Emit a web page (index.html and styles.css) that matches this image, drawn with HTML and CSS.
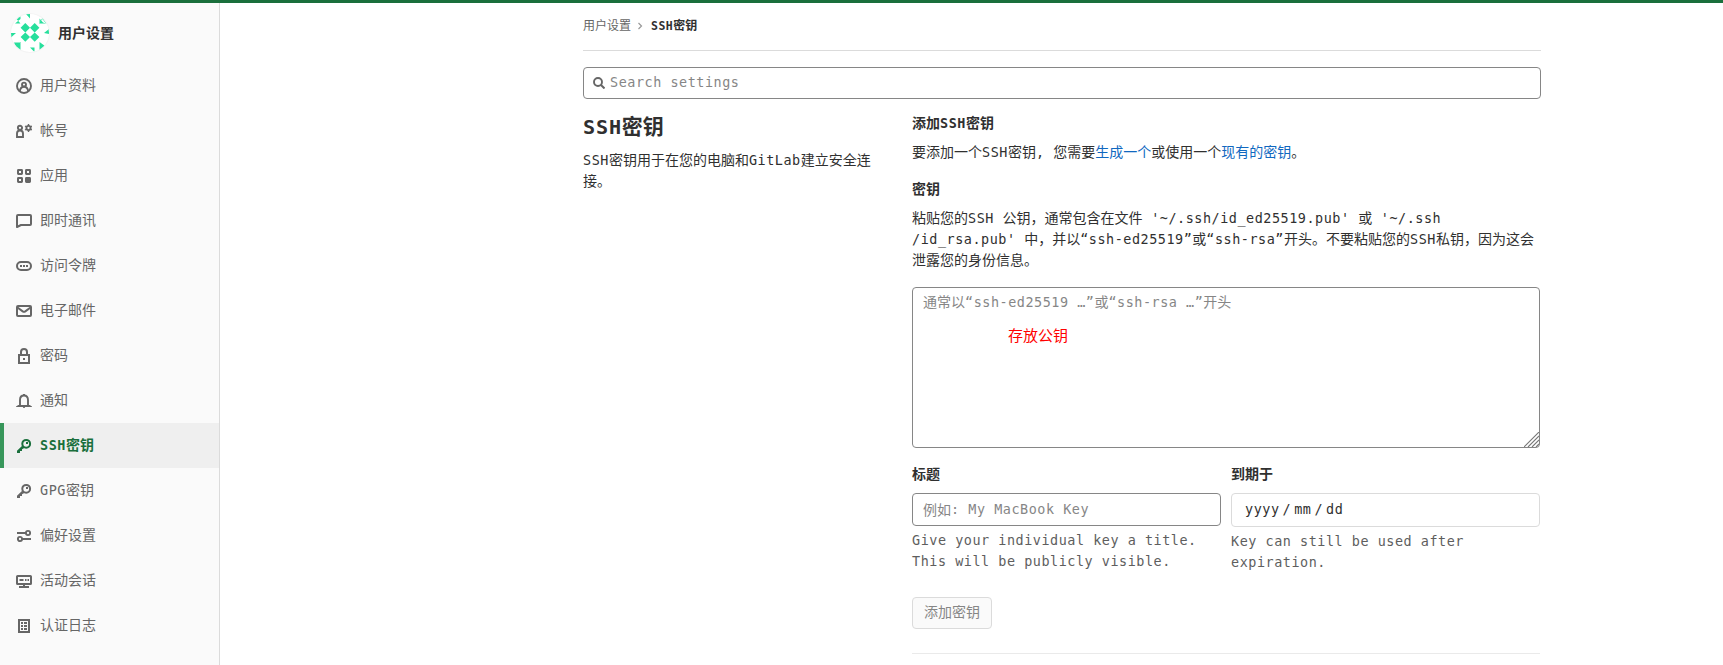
FILE: index.html
```html
<!DOCTYPE html>
<html lang="zh-CN">
<head>
<meta charset="utf-8">
<title>SSH密钥</title>
<link rel="stylesheet" href="styles.css">
</head>
<body>
<div class="topbar"></div>
<div class="layout">
<aside class="sidebar">
  <div class="context">
    <svg class="avatar" viewBox="0 0 38 38"><circle cx="19" cy="19" r="19" fill="#fff"/><g fill="#27df9c"><path d="M14.300 9l4.700 4.700-4.700 4.700-4.700-4.700zM23.700 9l4.700 4.700-4.700 4.700-4.700-4.700zM14.300 18.400l4.700 4.700-4.700 4.700-4.700-4.700zM23.700 18.400l4.700 4.700-4.700 4.700-4.700-4.700z"/><path d="M15 0h4v4.500zM9.500 .5v9l-4-4.500zM4 9.500h5.500V5zM28.500 4.500v5h6.500l-3-1zM28.500 9.500l3-6 4 6zM28 9.500h7L31.500 5zM38 15v5l-5-1zM0 19h5l-5 4.500zM3 28.500h7l-5 5zM9.500 28v9L5 33zM28.500 28l5.500 4-5.500 5.500zM19 33.500h4.500V38z"/></g></svg>
    <span>用户设置</span>
  </div>
  <nav>
    <a class="item"><svg viewBox="0 0 16 16"><g fill="none" stroke="currentColor" stroke-width="1.900"><circle cx="8" cy="8" r="7"/><circle cx="8" cy="6.600" r="2"/><path d="M3.800 13.200c.4-2.600 1.800-4.400 4.200-4.400s3.800 1.800 4.200 4.400"/></g></svg><span>用户资料</span></a>
    <a class="item"><svg viewBox="0 0 16 16"><g fill="none" stroke="currentColor" stroke-width="1.900"><circle cx="4" cy="4.800" r="2.100"/><path d="M1 14V10.500q0-3 3-3t3 3V14z"/><circle cx="12.500" cy="5" r="2.100"/></g><path d="M12.500 1v2M12.500 7v2M9 3l1.700 1M14.300 6l1.700 1M9 7l1.700-1M14.300 4L16 3" stroke="currentColor" stroke-width="1.400"/></svg><span>帐号</span></a>
    <a class="item"><svg viewBox="0 0 16 16"><g fill="none" stroke="currentColor" stroke-width="2"><rect x="2" y="2" width="4" height="4" rx=".4"/><rect x="10" y="2" width="4" height="4" rx=".4"/><rect x="2" y="10" width="4" height="4" rx=".4"/><rect x="10" y="10" width="4" height="4" rx=".4" fill="currentColor"/></g></svg><span>应用</span></a>
    <a class="item"><svg viewBox="0 0 16 16"><path d="M1 14V3q0-1 1-1h12q1 0 1 1v8q0 1-1 1H5z" fill="none" stroke="currentColor" stroke-width="2" stroke-linejoin="round"/></svg><span>即时通讯</span></a>
    <a class="item"><svg viewBox="0 0 16 16"><rect x="1" y="4" width="14" height="8" rx="4" fill="none" stroke="currentColor" stroke-width="2"/><path d="M4 7h2v2H4zM7 7h2v2H7zM10 7h2v2h-2z" fill="currentColor"/></svg><span>访问令牌</span></a>
    <a class="item"><svg viewBox="0 0 16 16"><g fill="none" stroke="currentColor" stroke-width="2"><rect x="1" y="3" width="14" height="10" rx="1"/><path d="M1.500 4.500L6.700 8.400q1.300.9 2.600 0l5.200-3.900"/></g></svg><span>电子邮件</span></a>
    <a class="item"><svg viewBox="0 0 16 16"><path d="M3 7h10v8H3zM5 7V4q0-3 3-3t3 3v3" fill="none" stroke="currentColor" stroke-width="2"/><path d="M7 10h2v2H7z" fill="currentColor"/></svg><span>密码</span></a>
    <a class="item"><svg viewBox="0 0 16 16"><path d="M4 12V7q0-4.500 4-4.500T12 7v5l1.500 1h-11z" fill="none" stroke="currentColor" stroke-width="1.900"/><path d="M7 1h2v2H7zM6.500 13.500h3l-1 1.500h-1z" fill="currentColor"/></svg><span>通知</span></a>
    <a class="item active"><svg viewBox="0 0 16 16"><circle cx="10.200" cy="5.800" r="3.900" fill="none" stroke="currentColor" stroke-width="2"/><path d="M6.200 7.700L1 12.700V15h3v-2h2v-1.800l2.800-1.500zM10 4h2v2h-2z" fill="currentColor"/></svg><span><i class="m">SSH</i>密钥</span></a>
    <a class="item"><svg viewBox="0 0 16 16"><circle cx="10.200" cy="5.800" r="3.900" fill="none" stroke="currentColor" stroke-width="2"/><path d="M6.200 7.700L1 12.700V15h3v-2h2v-1.800l2.800-1.500zM10 4h2v2h-2z" fill="currentColor"/></svg><span><i class="m">GPG</i>密钥</span></a>
    <a class="item"><svg viewBox="0 0 16 16"><g fill="none" stroke="currentColor" stroke-width="1.900"><circle cx="12" cy="5" r="2.100"/><path d="M1 5h9M6 11h9"/><circle cx="4" cy="11" r="2.100"/></g></svg><span>偏好设置</span></a>
    <a class="item"><svg viewBox="0 0 16 16"><rect x="1" y="3" width="14" height="8" rx=".6" fill="none" stroke="currentColor" stroke-width="2"/><path d="M3.500 6h4v2h-4zM9 6h1.500v2H9zM11.500 6H13v2h-1.500zM7 12h2v1H7zM3 13h10v2H3z" fill="currentColor"/></svg><span>活动会话</span></a>
    <a class="item"><svg viewBox="0 0 16 16"><rect x="3" y="2" width="10" height="12" fill="none" stroke="currentColor" stroke-width="2"/><path d="M5 4h2v2H5zM8 4h3v2H8zM5 7h2v2H5zM8 7h3v2H8zM5 10h2v2H5zM8 10h3v2H8z" fill="currentColor"/></svg><span>认证日志</span></a>
  </nav>
</aside>
<main class="content">
  <div class="crumbs"><span>用户设置</span><svg viewBox="0 0 8 8"><path d="M2.500 1l3 3-3 3" fill="none" stroke="#999" stroke-width="1.200"/></svg><b><i class="m">SSH</i>密钥</b></div>
  <div class="search"><svg viewBox="0 0 12 12"><circle cx="5" cy="5" r="4" fill="none" stroke="#666" stroke-width="1.900"/><path d="M8 8l3.500 3.500" stroke="#666" stroke-width="2"/></svg><span class="m">Search settings</span></div>
  <div class="settings">
    <section class="intro">
      <h1><i class="m">SSH</i>密钥</h1>
      <p><i class="m">SSH</i>密钥用于在您的电脑和<i class="m">GitLab</i>建立安全连接。</p>
    </section>
    <section class="form">
      <h2>添加<i class="m">SSH</i>密钥</h2>
      <p class="lead">要添加一个<i class="m">SSH</i>密钥<i class="m">, </i>您需要<a>生成一个</a>或使用一个<a>现有的密钥</a>。</p>
      <h2 class="label">密钥</h2>
      <p class="help">粘贴您的<i class="m">SSH </i>公钥，通常包含在文件<i class="m"> '~/.ssh/id_ed25519.pub' </i>或<i class="m"> '~/.ssh</i><br><i class="m">/id_rsa.pub' </i>中，并以<i class="m">“ssh-ed25519”</i>或<i class="m">“ssh-rsa”</i>开头。不要粘贴您的<i class="m">SSH</i>私钥，因为这会<br>泄露您的身份信息。</p>
      <div class="area">
        <div class="hint">通常以<i class="m">“ssh-ed25519 …”</i>或<i class="m">“ssh-rsa …”</i>开头</div>
        <div class="note">存放公钥</div>
        <svg class="grip" viewBox="0 0 15 15"><path d="M0 15L15 0M4 15L15 4M8 15l7-7M12 15l3-3" stroke="#777" stroke-width="1.100"/></svg>
      </div>
      <div class="fields">
        <div>
          <h2>标题</h2>
          <div class="input">例如<i class="m">: My MacBook Key</i></div>
          <p class="m sub">Give your individual key a title.<br>This will be publicly visible.</p>
        </div>
        <div>
          <h2>到期于</h2>
          <div class="input date"><span class="m">yyyy</span><span class="m">/</span><span class="m">mm</span><span class="m">/</span><span class="m">dd</span></div>
          <p class="m sub">Key can still be used after<br>expiration.</p>
        </div>
      </div>
      <div class="button">添加密钥</div>
      <hr>
    </section>
  </div>
</main>
</div>
</body>
</html>
```
FILE: styles.css
```css
* { box-sizing: border-box; }
body {
  margin: 0;
  height: 665px;
  overflow: hidden;
  background: #fff;
  color: #303030;
  font: 14px/21px "Noto Sans CJK SC", sans-serif;
}
h1, h2, p { margin: 0; }
i { font-style: normal; }
.m {
  font-family: "DejaVu Sans Mono", monospace;
  font-size: .96em;
  letter-spacing: .04em;
  line-height: 1;
  white-space: pre;
}
.topbar { height: 3px; background: #1a6f3c; }
.layout { display: flex; height: 662px; }
.sidebar {
  width: 220px;
  background: #fafafa;
  border-right: 1px solid #dbdbdb;
}
.context {
  display: flex;
  align-items: center;
  gap: 9px;
  height: 60px;
  padding-left: 11px;
  font-weight: 700;
}
.context span { margin-bottom: 2px; }
.avatar { width: 38px; height: 38px; border-radius: 50%; box-shadow: 0 0 0 1px #f4f4f4; }
.item {
  display: flex;
  align-items: center;
  gap: 8px;
  height: 45px;
  padding: 0 0 3px 16px;
  color: #666;
}
.item svg { width: 16px; height: 16px; margin-top: 3px; }
.item.active {
  padding-left: 12px;
  border-left: 4px solid #37965a;
  background: #efefef;
  color: #1a6f3c;
  font-weight: 700;
}
.content { width: 958px; margin-left: 363px; }
.crumbs {
  display: flex;
  align-items: center;
  height: 48px;
  padding-bottom: 5px;
  border-bottom: 1px solid #dbdbdb;
  color: #666;
  font-size: 12px;
}
.crumbs svg { width: 8px; height: 8px; margin: 4px 7px 0 5px; }
.crumbs b { color: #303030; }
.search {
  display: flex;
  align-items: center;
  gap: 5px;
  height: 32px;
  margin-top: 16px;
  padding-left: 9px;
  border: 1px solid #868686;
  border-radius: 4px;
  color: #868686;
}
.search svg { width: 12px; height: 12px; }
.settings { display: flex; justify-content: space-between; padding-right: 1px; }
.intro { width: 295px; padding-top: 14px; }
.intro h1 { margin-bottom: 12px; font-size: 21px; line-height: 24px; }
.form { width: 628px; padding-top: 13px; }
h2 { font-size: 14px; line-height: 21px; }
.lead { margin: 8px 0 16px; }
.lead a { color: #1068bf; }
.help { margin: 8px 0 17px; white-space: nowrap; }
.area {
  position: relative;
  height: 161px;
  padding: 3px 10px;
  border: 1px solid #868686;
  border-radius: 4px;
  color: #868686;
}
.note { margin: 12px 0 0 85px; color: #f00; font-size: 15px; }
.grip { position: absolute; right: 0; bottom: 0; width: 15px; height: 15px; }
.fields {
  display: grid;
  grid-template-columns: 309px 309px;
  justify-content: space-between;
  margin-top: 15px;
}
.input {
  display: flex;
  align-items: center;
  height: 33px;
  margin: 9px 0 4px;
  padding-left: 10px;
  border: 1px solid #868686;
  border-radius: 4px;
  color: #868686;
}
.date { height: 34px; padding-left: 13px; gap: 3px; border-color: #dbdbdb; color: #303030; }
.sub { font-size: 13.44px; line-height: 21px; color: #5e5e5e; }
.button {
  display: flex;
  align-items: center;
  justify-content: center;
  width: 80px;
  height: 32px;
  margin-top: 24px;
  padding-bottom: 3px;
  border: 1px solid #dbdbdb;
  border-radius: 4px;
  background: #fafafa;
  color: #868686;
}
hr { margin: 24px 0 0; border: 0; border-top: 1px solid #eaeaea; }
```
